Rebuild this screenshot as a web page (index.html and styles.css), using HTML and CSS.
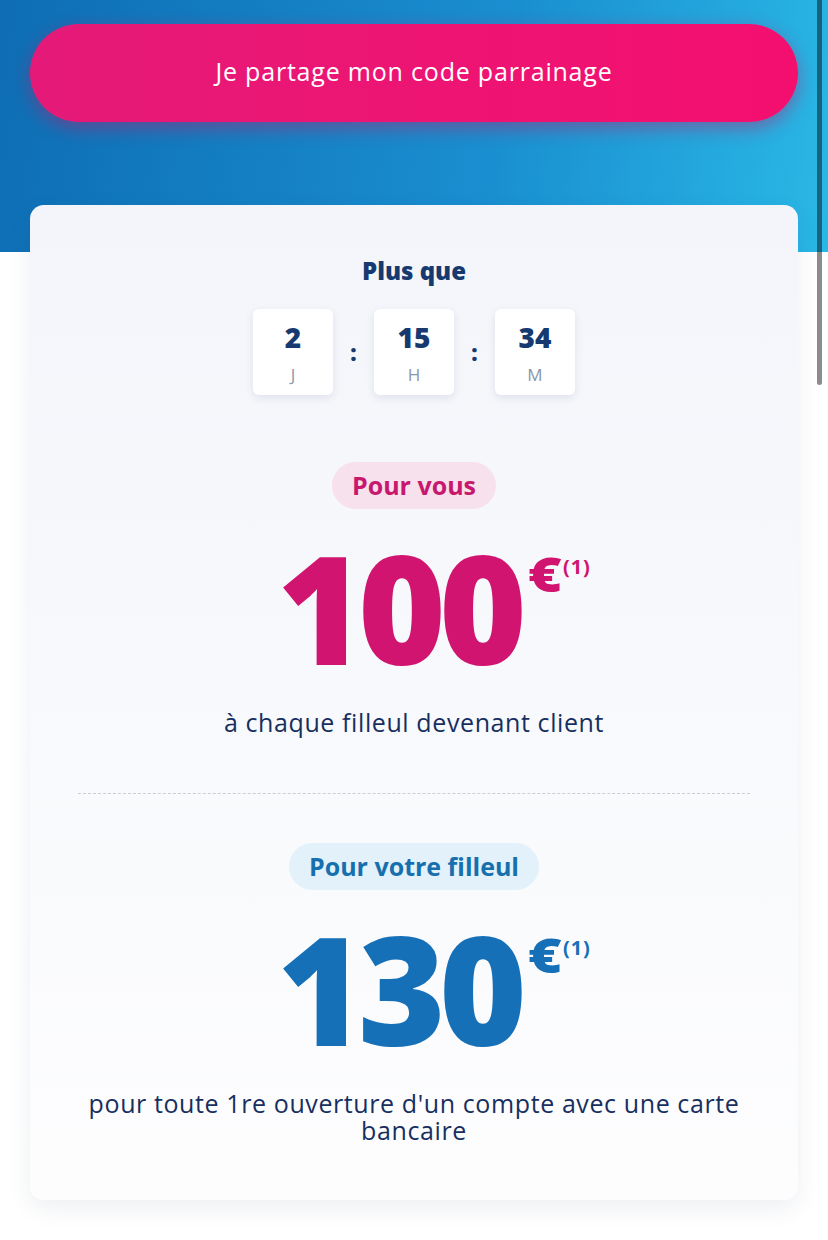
FILE: index.html
```html
<!DOCTYPE html>
<html lang="fr">
<head>
  <meta charset="UTF-8">
  <meta name="viewport" content="width=device-width, initial-scale=1.0">
  <title>Parrainage</title>
  <link rel="stylesheet" href="styles.css">
</head>
<body>
<div class="page">
  <button class="share-btn" type="button">Je partage mon code parrainage</button>

  <div class="card">
    <h2 class="countdown-title">Plus que</h2>
    <div class="countdown">
      <div class="time-box">
        <span class="time-value">2</span>
        <span class="time-unit">J</span>
      </div>
      <span class="time-sep">:</span>
      <div class="time-box">
        <span class="time-value">15</span>
        <span class="time-unit">H</span>
      </div>
      <span class="time-sep">:</span>
      <div class="time-box">
        <span class="time-value">34</span>
        <span class="time-unit">M</span>
      </div>
    </div>

    <div class="offer offer-you">
      <span class="pill">Pour vous</span>
      <div class="amount">
        <span class="amount-value">100</span>
        <span class="amount-sup"><span class="euro">€</span><span class="note">(1)</span></span>
      </div>
      <p class="offer-text">à chaque filleul devenant client</p>
    </div>

    <hr class="divider">

    <div class="offer offer-friend">
      <span class="pill">Pour votre filleul</span>
      <div class="amount">
        <span class="amount-value">130</span>
        <span class="amount-sup"><span class="euro">€</span><span class="note">(1)</span></span>
      </div>
      <p class="offer-text">pour toute 1re ouverture d'un compte avec une carte bancaire</p>
    </div>
  </div>
</div>
<div class="scrollbar"></div>
</body>
</html>
```

FILE: styles.css
```css
/* Page */
body {
  margin: 0;
  background-color: #fff;
  font-family: "Open Sans", Lato, sans-serif;
  color: #1b3566;
}

.page {
  padding: 24px 30px 40px;
  background:
    linear-gradient(100deg, #0e6db4 0%, #1a8fd0 60%, #2ab8e6 100%) top / 100% 252px no-repeat,
    #fff;
}

/* Share button */
.share-btn {
  display: block;
  width: 100%;
  height: 98px;
  padding: 0 0 4px;
  border: none;
  border-radius: 49px;
  background: linear-gradient(90deg, #e51a78 0%, #f40f6f 100%);
  box-shadow: 0 6px 18px rgba(200, 20, 100, 0.45);
  color: #fff;
  font-family: inherit;
  font-size: 25px;
  letter-spacing: 0.8px;
  cursor: pointer;
}

/* Card */
.card {
  margin-top: 83px;
  height: 995px;
  box-sizing: border-box;
  padding: 52px 48px 0;
  border-radius: 14px;
  background: linear-gradient(180deg, #f3f5fa 0%, #fdfdfe 100%);
  box-shadow: 0 8px 24px rgba(30, 50, 90, 0.08);
  text-align: center;
}

.countdown-title {
  margin: 0;
  font-size: 24px;
  line-height: 28px;
  font-weight: 800;
  color: #163a70;
}

/* Countdown */
.countdown {
  display: flex;
  justify-content: center;
  align-items: center;
  gap: 16px;
  margin-top: 24px;
}

.time-box {
  display: flex;
  flex-direction: column;
  align-items: center;
  width: 80px;
  height: 86px;
  box-sizing: border-box;
  padding-top: 12px;
  border-radius: 6px;
  background-color: #fff;
  box-shadow: 0 3px 8px rgba(30, 50, 90, 0.10);
}

.time-value {
  font-size: 28px;
  line-height: 32px;
  font-weight: 800;
  color: #163a70;
}

.time-unit {
  margin-top: 12px;
  font-size: 17px;
  line-height: 20px;
  color: #8a97aa;
}

.time-sep {
  width: 9px;
  font-size: 22px;
  font-weight: 800;
  color: #163a70;
}

/* Offers */
.offer {
  display: flex;
  flex-direction: column;
  align-items: center;
}

.offer-you {
  margin-top: 67px;
}

.pill {
  height: 47px;
  padding: 0 20px;
  border-radius: 24px;
  font-size: 25px;
  line-height: 46px;
  font-weight: 700;
}

.offer-you .pill {
  background-color: #f7e1ec;
  color: #c8186e;
}

.offer-friend .pill {
  background-color: #e2f1fa;
  color: #1670ae;
}

.amount {
  display: flex;
  align-items: flex-start;
  margin-top: 28px;
  padding-left: 40px;
  height: 140px;
}

.amount-value {
  font-size: 150px;
  line-height: 140px;
  font-weight: 800;
  letter-spacing: -7px;
}

.amount-sup {
  display: flex;
  align-items: flex-start;
  margin-top: 13px;
  margin-left: 8px;
}

.euro {
  display: inline-block;
  font-size: 48px;
  line-height: 48px;
  font-weight: 800;
  transform: scaleX(1.2);
  transform-origin: left center;
  margin-right: 7px;
}

.note {
  margin-top: 7px;
  font-size: 20px;
  line-height: 20px;
  font-weight: 700;
  letter-spacing: 1px;
}

.offer-you .amount {
  color: #d0146f;
}

.offer-friend .amount {
  color: #1670b8;
}

.offer-text {
  margin: 32px 0 0;
  font-size: 25px;
  line-height: 27px;
  letter-spacing: 0.6px;
  color: #172f5e;
}

/* Divider */
.divider {
  margin: 57px 0 49px;
  border: none;
  border-top: 1px dashed #c9ced6;
}

/* Scroll indicator over the page */
.scrollbar {
  position: absolute;
  top: 0;
  left: 817px;
  width: 5px;
  height: 385px;
  border-radius: 0 0 3px 3px;
  background-color: rgba(0, 0, 0, 0.45);
}
```
